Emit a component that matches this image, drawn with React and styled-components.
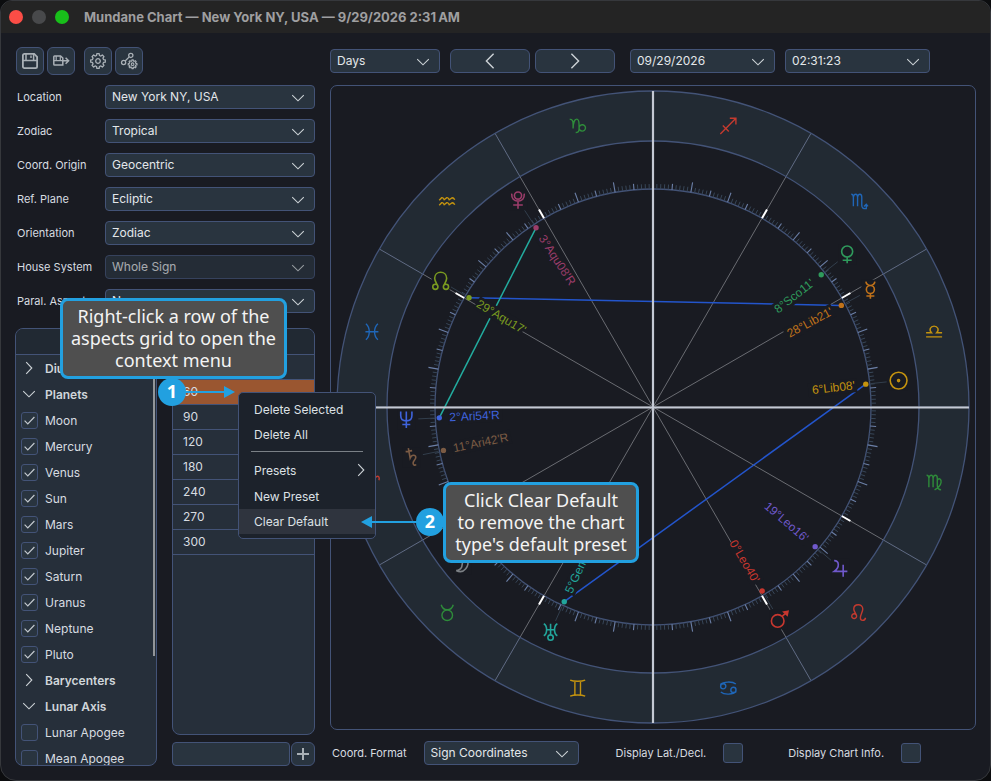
import React from "react";
import styled, { createGlobalStyle } from "styled-components";

const GlobalStyle = createGlobalStyle`
  * {
    box-sizing: border-box;
  }
  body {
    margin: 0;
    background-color: #0c0d0f;
    font-family: Inter, "Liberation Sans", sans-serif;
  }
`;

const Window = styled.div`
  position: relative;
  display: flex;
  flex-direction: column;
  min-height: 100vh;
  border: 1px solid #36383c;
  border-radius: 12px 12px 16px 16px;
  background-color: #191b22;
  color: #d7dce0;
  overflow: hidden;
`;

const TitleBar = styled.header`
  display: flex;
  align-items: center;
  gap: 9px;
  height: 32px;
  padding: 0 8px;
  background-color: #242424;
`;

const Light = styled.button`
  width: 14px;
  height: 14px;
  padding: 0;
  border: none;
  border-radius: 50%;
  background: ${({ $color }) => $color};
`;

const Title = styled.h1`
  margin: 0 0 0 6px;
  font-size: 13px;
  font-weight: 700;
  line-height: 16px;
  color: #9f9fa0;
`;

const Body = styled.div`
  display: grid;
  grid-template-columns: 300px 1fr;
  gap: 15px;
  flex: 1;
  padding: 14px;
`;

const Column = styled.div`
  display: flex;
  flex-direction: column;
  gap: 10px;
  min-width: 0;
`;

const Toolbar = styled.div`
  display: flex;
  align-items: center;
  gap: 9px;
  height: 28px;
  padding-left: 1px;
`;

const Controls = styled(Toolbar)`
  gap: 10px;
  padding-left: 0;
`;

const ButtonGroup = styled.div`
  display: flex;
  gap: ${({ $gap }) => $gap}px;
  margin-right: ${({ $after }) => $after}px;
`;

const IconButton = styled.button`
  display: flex;
  align-items: center;
  justify-content: center;
  flex: none;
  width: ${({ $width }) => $width || 28}px;
  height: ${({ $height }) => $height || 28}px;
  padding: 0;
  border: 1px solid #435377;
  border-radius: 6px;
  background-color: #29343f;
  color: #a9b0b6;
`;

const Fields = styled.div`
  display: grid;
  grid-template-columns: 90px 1fr;
  row-gap: 10px;
  align-items: center;
`;

const FieldLabel = styled.label`
  font-size: 11px;
  line-height: 16px;
  padding-left: 2px;
  white-space: nowrap;
`;

const SelectBox = styled.div`
  position: relative;
  flex: none;
  width: ${({ $width }) => ($width ? `${$width}px` : "100%")};
  height: 24px;
  opacity: ${({ $dim }) => ($dim ? 0.7 : 1)};

  svg {
    position: absolute;
    right: 9px;
    top: 5px;
    pointer-events: none;
  }
`;

const SelectInput = styled.select`
  appearance: none;
  width: 100%;
  height: 24px;
  padding: 0 24px 0 6px;
  border: 1px solid #435377;
  border-radius: 4px;
  background-color: #29343f;
  color: #e3e7ea;
  font-family: inherit;
  font-size: 12px;
  line-height: 20px;
  opacity: 1;
`;

const Panels = styled.div`
  display: grid;
  grid-template-columns: 142px 143px;
  justify-content: space-between;
  flex: 1;
  margin-top: 5px;
`;

const Panel = styled.section`
  display: flex;
  flex-direction: column;
  position: relative;
  border: 1px solid #435377;
  border-radius: 8px;
  background-color: #262f3a;
  overflow: hidden;
  flex: ${({ $grow }) => ($grow ? 1 : "none")};
`;

const PanelHeader = styled.div`
  height: 26px;
  border-bottom: 1px solid #435377;
  background-color: #212933;
`;

const TreeBody = styled.div`
  height: 410px;
  overflow: hidden;
`;

const ScrollThumb = styled.div`
  position: absolute;
  right: 1px;
  top: 27px;
  width: 2px;
  height: 300px;
  background-color: #929598;
`;

const TreeGroup = styled.button`
  display: flex;
  align-items: center;
  gap: 8px;
  width: 100%;
  height: 26px;
  padding: 0 0 0 5px;
  border: none;
  background: none;
  color: #d0d6da;
  font-family: inherit;
  font-size: 12px;
  font-weight: 600;
`;

const TreeIcon = styled.span`
  display: flex;
  justify-content: center;
  width: 16px;
`;

const TreeItem = styled.label`
  display: flex;
  align-items: center;
  gap: 7px;
  height: 26px;
  padding-left: 5px;
  font-size: 12px;
`;

const CheckBox = styled.span`
  display: inline-grid;
  width: ${({ $size }) => $size}px;
  height: ${({ $size }) => $size}px;

  input,
  svg {
    grid-area: 1 / 1;
  }

  svg {
    place-self: center;
    pointer-events: none;
  }

  input {
    appearance: none;
    width: 100%;
    height: 100%;
    margin: 0;
    border: 1px solid #435377;
    border-radius: 3px;
    background-color: #29343f;
  }
`;

const AspectColumn = styled.div`
  display: flex;
  flex-direction: column;
  gap: 7px;
`;

const AspectTable = styled.table`
  width: 100%;
  border-collapse: separate;
  border-spacing: 0;
`;

const AspectCell = styled.td`
  height: 25px;
  padding: 0 10px;
  border-bottom: 1px solid #435377;
  background-color: ${({ $selected }) => ($selected ? "#9a5630" : "transparent")};
  font-size: 12px;
  line-height: 16px;
`;

const AddRow = styled.div`
  display: flex;
  gap: 1px;
`;

const AspectInput = styled.input`
  flex: 1;
  min-width: 0;
  height: 24px;
  padding: 0 6px;
  border: 1px solid #435377;
  border-radius: 4px;
  background-color: #29343f;
  color: #e3e7ea;
`;

const ChartPanel = styled.section`
  border: 1px solid #435377;
  border-radius: 7px;
  line-height: 0;

  svg {
    width: 100%;
    height: auto;
  }
`;

const Footer = styled.div`
  display: flex;
  align-items: center;
  height: 24px;
  margin-top: 1px;
  gap: 17px;
`;

const FooterOption = styled.div`
  display: flex;
  align-items: center;
  gap: 17px;
  margin-left: ${({ $space }) => $space}px;
`;

const ContextMenu = styled.div`
  position: absolute;
  left: 237px;
  top: 391px;
  width: 138px;
  padding: 4px 0;
  border: 1px solid #435377;
  border-radius: 5px;
  background-color: #1c222b;
`;

const MenuItem = styled.button`
  display: flex;
  align-items: center;
  justify-content: space-between;
  width: 100%;
  height: ${({ $tall }) => ($tall ? 26 : 25)}px;
  padding: 0 6px 0 15px;
  border: none;
  background-color: ${({ $active }) => ($active ? "#2f343e" : "transparent")};
  color: #dde1e5;
  font-family: inherit;
  font-size: 12px;
`;

const MenuRule = styled.hr`
  margin: 4px 12px 5px;
  border: none;
  border-top: 1px solid #7a8086;
`;

const Callout = styled.div`
  position: absolute;
  left: ${({ $x }) => $x}px;
  top: ${({ $y }) => $y}px;
  width: ${({ $width }) => $width}px;
  padding: 4px 0 5px;
  border: 3px solid #22a0e0;
  border-radius: 8px;
  background-color: #4f4f4f;
  color: #f4f4f4;
  font-family: "Noto Sans", "Open Sans", sans-serif;
  font-size: 18px;
  line-height: 22px;
  text-align: center;
  white-space: pre;
`;

const Pointer = styled.svg`
  position: absolute;
  left: ${({ $x }) => $x}px;
  top: ${({ $y }) => $y}px;
  font-family: "Noto Sans", "Open Sans", sans-serif;
  font-size: 18px;
  font-weight: 700;
`;

const ChartLabel = styled.text`
  font-family: "Liberation Sans", sans-serif;
  font-size: 12px;
`;

const Chevron = ({ dir = "down", large }) => {
  const turns = { down: 0, left: 90, right: -90 };
  return (
    <svg width="16" height="16" viewBox="-8 -8 16 16">
      <path
        d={large ? "M-7.2 -3.6L0 3.6L7.2 -3.6" : "M-5.8 -2.8L0 2.8L5.8 -2.8"}
        fill="none"
        stroke="#ccd2d6"
        strokeWidth={large ? 1.4 : 1.1}
        transform={`rotate(${turns[dir]})`}
      />
    </svg>
  );
};

const gearPath = (outer, inner, teeth) => {
  const points = [];
  for (let i = 0; i < teeth; i++) {
    [
      [-0.32, inner],
      [-0.2, outer],
      [0.2, outer],
      [0.32, inner],
    ].forEach(([offset, r]) => {
      const a = ((i + offset) * 2 * Math.PI) / teeth;
      points.push(`${(Math.sin(a) * r).toFixed(2)} ${(-Math.cos(a) * r).toFixed(2)}`);
    });
  }
  return `M${points.join("L")}Z`;
};

const SaveIcon = () => (
  <svg width="18" height="18" viewBox="0 0 18 18" fill="none" stroke="currentColor" strokeWidth="1.8">
    <path d="M3.5 1.9H13.2L16.1 4.8V14.5Q16.1 16.1 14.5 16.1H3.5Q1.9 16.1 1.9 14.5V3.5Q1.9 1.9 3.5 1.9Z" />
    <path d="M2 8.6H16M5 2V8.6M12.6 2V8.6" strokeWidth="1.5" />
    <path d="M10 3.4V6" strokeWidth="1.4" />
  </svg>
);

const ExportIcon = () => (
  <svg width="18" height="18" viewBox="0 0 18 18" fill="none" stroke="currentColor" strokeWidth="1.5">
    <path d="M2.6 4H8.6L10.8 6V13H2.6Q1.8 13 1.8 12.2V4.8Q1.8 4 2.6 4Z" />
    <path d="M2 8.6H10.6M4.2 4V8.4M8.3 4V8.4" strokeWidth="1.2" />
    <path d="M10 8.8H16M13.6 5.8L16.6 8.8L13.6 11.8" />
  </svg>
);

const GearIcon = () => (
  <svg width="18" height="18" viewBox="-9 -9 18 18" fill="none" stroke="currentColor" strokeLinejoin="round">
    <path d={gearPath(7.4, 5.7, 8)} strokeWidth="1.3" />
    <circle r="2.3" strokeWidth="1.3" />
  </svg>
);

const AspectSettingsIcon = () => (
  <svg width="18" height="18" viewBox="-9 -9 18 18" fill="none" stroke="currentColor" strokeLinejoin="round">
    <circle cx="-5.4" cy="1.5" r="2.1" strokeWidth="1.3" />
    <circle cx="1.8" cy="-5.6" r="2.1" strokeWidth="1.3" />
    <path d="M-3.9 0L0.3 -4.1" strokeWidth="1.3" />
    <g transform="translate(3.6 3.2)">
      <path d={gearPath(4.4, 3.3, 8)} strokeWidth="1.2" />
      <circle r="1.3" strokeWidth="1.1" />
    </g>
  </svg>
);

const Select = ({ id, value, width, disabled, label }) => (
  <SelectBox $width={width} $dim={disabled}>
    <SelectInput id={id} aria-label={label} disabled={disabled} defaultValue={value}>
      <option>{value}</option>
    </SelectInput>
    <Chevron />
  </SelectBox>
);

const Check = ({ id, size = 17, checked }) => (
  <CheckBox $size={size}>
    <input id={id} type="checkbox" defaultChecked={checked} />
    {checked && (
      <svg width="11" height="9" viewBox="0 0 11 9">
        <path d="M0.6 4.6L3.8 7.8L10.4 1" fill="none" stroke="#c3c9ce" strokeWidth="1.2" />
      </svg>
    )}
  </CheckBox>
);

const fields = [
  { id: "location", label: "Location", value: "New York NY, USA" },
  { id: "zodiac", label: "Zodiac", value: "Tropical" },
  { id: "origin", label: "Coord. Origin", value: "Geocentric" },
  { id: "plane", label: "Ref. Plane", value: "Ecliptic" },
  { id: "orientation", label: "Orientation", value: "Zodiac" },
  { id: "houses", label: "House System", value: "Whole Sign", disabled: true },
  { id: "parallels", label: "Paral. Aspects", value: "None" },
];

const tree = [
  { name: "Diurnal", open: false, items: [] },
  {
    name: "Planets",
    open: true,
    checked: true,
    items: ["Moon", "Mercury", "Venus", "Sun", "Mars", "Jupiter", "Saturn", "Uranus", "Neptune", "Pluto"],
  },
  { name: "Barycenters", open: false, items: [] },
  { name: "Lunar Axis", open: true, checked: false, items: ["Lunar Apogee", "Mean Apogee"] },
];

const aspects = ["", "60", "90", "120", "180", "240", "270", "300"];

const RED = "#c43a2f";
const GREEN = "#2e8b3a";
const YELLOW = "#c4930f";
const BLUE = "#1f66b8";

// glyphs are drawn around 0,0 in a box of about 16px
const signs = [
  { color: RED, d: "M-7 -2C-9 -8 -1 -9 0 7C1 -9 9 -8 7 -2" },
  { color: GREEN, d: "M-6 -8C-5 -4 -3 -3 0 -3S5 -4 6 -8M5.3 2.5A5.3 5.3 0 1 1 -5.3 2.5A5.3 5.3 0 1 1 5.3 2.5" },
  { color: YELLOW, d: "M-7.5 -8C-4 -6.5 4 -6.5 7.5 -8M-7.5 8C-4 6.5 4 6.5 7.5 8M-2.8 -7V7M2.8 -7V7" },
  {
    color: BLUE,
    d: "M-8 -3.5C-5 -6.5 4 -7 7.5 -4M8 3.5C5 6.5 -4 7 -7.5 4M-2.5 -1.8A2.6 2.6 0 1 1 -7.7 -1.8A2.6 2.6 0 1 1 -2.5 -1.8M7.7 1.8A2.6 2.6 0 1 1 2.5 1.8A2.6 2.6 0 1 1 7.7 1.8",
  },
  {
    color: RED,
    d: "M-2.2 3.4A2.4 2.4 0 1 1 -7 3.4A2.4 2.4 0 1 1 -2.2 3.4C-2.2 1 -5 -1 -5 -3.8C-5 -9.5 4 -9.5 4 -3.8C4 -1 1.6 2 1.6 5C1.6 8.5 6 8.5 6.8 5",
  },
  {
    color: GREEN,
    d: "M-7.5 -7C-5.8 -7 -5.2 -6 -5.2 -4V5M-5.2 -4C-4.5 -8 -1 -8 -1 -4V5M-1 -4C-0.3 -8 3.2 -8 3.2 -4V3C3.2 5.5 4.5 7.5 7 7.5M3.2 -2C5 -5 7.5 -3 7 0C6.5 3 4 5.5 0.5 7.5",
  },
  { color: YELLOW, d: "M-8 5.2H8M-8 1H-2.6C-5.6 -2 -3.4 -5.6 0 -5.6S5.6 -2 2.6 1H8" },
  {
    color: BLUE,
    d: "M-7.5 -7C-6 -7 -5.4 -6 -5.4 -4V5M-5.4 -4C-4.8 -8 -1.2 -8 -1.2 -4V5M-1.2 -4C-0.6 -8 3 -8 3 -4V4C3 7 4.5 7.6 7.5 7.4V3.6M5.2 5.2L7.5 3L9.2 5.2",
  },
  { color: RED, d: "M-8 8L7.6 -7.6M1.5 -7.6H7.6V-1.5M-5.5 -0.5L0.5 5.5" },
  {
    color: GREEN,
    d: "M-8 -6.5C-5.6 -7 -4.6 -5 -4.6 -2V2.5C-4.6 -3 -3 -6.8 -1 -6.8S1.4 -4 1.4 -1V3C1.4 5.5 0.4 6.6 -2 6.6M1.4 2A3.2 3.2 0 1 1 4.4 5.2C2.6 5.2 1.4 3.5 1.4 2",
  },
  {
    color: YELLOW,
    d: "M-8 -1L-5.5 -3.5Q-4 -4 -3 -1.5L-0.5 -3.5Q1 -4 2 -1.5L5 -3.5Q6.5 -3.5 7.5 -1.5M-8 4L-5.5 1.5Q-4 1 -3 3.5L-0.5 1.5Q1 1 2 3.5L5 1.5Q6.5 1.5 7.5 3.5",
  },
  { color: BLUE, d: "M-6 -8C-1.5 -4 -1.5 4 -6 8M6 -8C1.5 -4 1.5 4 6 8M-6.5 0H6.5" },
];

const bodies = [
  {
    name: "Moon",
    lon: 39.6,
    label: "9°Tau36'",
    color: "#7c8085",
    d: "M-6.5 6C1 10 8 2 4 -7M-6.5 6C-1 6 1 0 -1 -5",
  },
  {
    name: "Mercury",
    lon: 208.35,
    label: "28°Lib21'",
    color: "#c0721a",
    d: "M-4.5 -8C-4 -5 -2 -4.2 0 -4.2S4 -5 4.5 -8M4 -0.2A4 4 0 1 1 -4 -0.2A4 4 0 1 1 4 -0.2M0 3.8V9M-4 6.3H4",
  },
  {
    name: "Venus",
    lon: 218.18,
    label: "8°Sco11'",
    color: "#2f9a5c",
    d: "M5.5 -2.8A5.5 5.5 0 1 1 -5.5 -2.8A5.5 5.5 0 1 1 5.5 -2.8M0 2.7V9M-4.5 5.9H4.5",
  },
  {
    name: "Sun",
    lon: 186.13,
    label: "6°Lib08'",
    color: "#c4930f",
    d: "M8.4 0A8.4 8.4 0 1 1 -8.4 0A8.4 8.4 0 1 1 8.4 0M1 0A1 1 0 1 1 -1 0A1 1 0 1 1 1 0",
  },
  {
    name: "Mars",
    lon: 120.67,
    label: "0°Leo40'",
    color: "#c8372f",
    d: "M5 1.5A6.3 6.3 0 1 1 -7.6 1.5A6.3 6.3 0 1 1 5 1.5M3.2 -3L8.6 -8M4.8 -7.4L9 -8.2L8.2 -4.2Z",
  },
  {
    name: "Jupiter",
    lon: 139.27,
    label: "19°Leo16'",
    color: "#7059cc",
    d: "M-6 -7.5C-1 -7.5 0 -1 -6 3.2H7.2M3 -3.5V8.5",
  },
  {
    name: "Saturn",
    lon: 11.7,
    label: "11°Ari42'R",
    color: "#7b5b44",
    d: "M-5.5 -5.5L1 -6.5M-2.8 -9L-1 1C1 -3.5 5.5 -2 4.5 1C4 3 1.5 4.2 2 6.5C2.4 8.4 4 8.4 5 7.4",
  },
  {
    name: "Uranus",
    lon: 65.5,
    label: "5°Gem32'R",
    color: "#22a59b",
    d: "M-6.8 -8C-3 -6 -3 2 -6.8 4M6.8 -8C3 -6 3 2 6.8 4M-4 -2H4M0 -8V3M2.7 5.8A2.7 2.7 0 1 1 -2.7 5.8A2.7 2.7 0 1 1 2.7 5.8",
  },
  {
    name: "Neptune",
    lon: 2.9,
    label: "2°Ari54'R",
    color: "#3f63dc",
    d: "M-5.6 -8V-4C-5.6 0.5 -3 1.4 0 1.4S5.6 0.5 5.6 -4V-8M0 -8V8.6M-4 5H4",
  },
  {
    name: "Pluto",
    lon: 303.13,
    label: "3°Aqu08'R",
    color: "#9b3d6a",
    d: "M-6.3 -6.5C-6.5 -1.5 -4 1 0 1S6.5 -1.5 6.3 -6.5M3.6 -4.6A3.6 3.6 0 1 1 -3.6 -4.6A3.6 3.6 0 1 1 3.6 -4.6M0 1V8.5M-4.8 4.8H4.8",
  },
  {
    name: "Node",
    lon: 329.28,
    label: "29°Aqu17'",
    color: "#7a9a20",
    d: "M-2.7 6A2.6 2.6 0 1 1 -7.9 6A2.6 2.6 0 1 1 -2.7 6C-2.7 3.5 -6 1.5 -6 -2.5C-6 -10.5 6 -10.5 6 -2.5C6 1.5 2.7 3.5 2.7 6A2.6 2.6 0 1 0 7.9 6A2.6 2.6 0 1 0 2.7 6",
  },
];

const lines = [
  { from: "Node", to: "Mercury", color: "#2355cc" },
  { from: "Sun", to: "Uranus", color: "#2355cc" },
  { from: "Pluto", to: "Neptune", color: "#23ac9f" },
];

// 0° Aries sits on the left, longitudes run counterclockwise
const point = (lon, r) => {
  const a = (lon * Math.PI) / 180;
  return { x: -r * Math.cos(a), y: r * Math.sin(a) };
};

const Spoke = ({ lon, from, to, ...rest }) => {
  const a = point(lon, from);
  const b = point(lon, to);
  return <line x1={a.x} y1={a.y} x2={b.x} y2={b.y} {...rest} />;
};

const ticks = Array.from({ length: 360 }, (_, i) => i).filter((i) => i % 90 !== 0);
const cusps = Array.from({ length: 12 }, (_, i) => i * 30);

const tickStyle = (i) => {
  if (i % 30 === 0) return { to: 228, stroke: "#ffffff", strokeWidth: 2 };
  if (i % 10 === 0) return { to: 228, stroke: "#6c80a8", strokeWidth: 1.1 };
  if (i % 5 === 0) return { to: 224, stroke: "#6c80a8", strokeWidth: 1.1 };
  return { to: 223, stroke: "#374658", strokeWidth: 1 };
};

const BodyLabel = ({ body }) => {
  const right = body.lon > 90 && body.lon < 270;
  const width = body.label.length * 5.6;
  return (
    <g transform={`rotate(${right ? 180 - body.lon : -body.lon})`}>
      <rect x={right ? 201 - width : -205} y="-7" width={width + 4} height="14" fill="#191b22" />
      <ChartLabel x={right ? 203 : -204} y="4" textAnchor={right ? "end" : "start"} fill={body.color}>
        {body.label}
      </ChartLabel>
    </g>
  );
};

const Chart = () => (
  <svg viewBox="-322 -321 644 643" role="img" aria-label="Mundane chart">
    <circle r="291" fill="none" stroke="#222a33" strokeWidth="50" />
    {cusps.map((lon) => (
      <g key={lon}>
        <Spoke lon={lon} from={0} to={266} stroke="#6a6c72" />
        <Spoke lon={lon} from={266} to={316} stroke="#606b84" />
      </g>
    ))}
    {[218, 266, 316].map((r) => (
      <circle key={r} r={r} fill="none" stroke="#435377" strokeWidth="1.3" />
    ))}
    {ticks.map((i) => (
      <Spoke key={i} lon={i} from={218} {...tickStyle(i)} />
    ))}
    {lines.map((line) => {
      const a = point(bodies.find((body) => body.name === line.from).lon, 214);
      const b = point(bodies.find((body) => body.name === line.to).lon, 214);
      return (
        <line key={line.from} x1={a.x} y1={a.y} x2={b.x} y2={b.y} stroke={line.color} strokeWidth="1.5" />
      );
    })}
    {bodies.map((body) => (
      <BodyLabel key={body.name} body={body} />
    ))}
    <path d="M-316 0.5H316M0 -316V316" stroke="#c4c9d4" strokeWidth="2.2" />
    {bodies.map((body) => {
      const dot = point(body.lon, 214);
      const glyph = point(body.lon, 247);
      return (
        <g key={body.name}>
          <Spoke lon={body.lon} from={219} to={235} stroke="#323e4c" />
          <circle cx={dot.x} cy={dot.y} r="2.7" fill={body.color} />
          <g transform={`translate(${glyph.x} ${glyph.y})`}>
            <rect x="-9" y="-10" width="18" height="20" fill="#191b22" />
            <path d={body.d} fill="none" stroke={body.color} strokeWidth="1.6" />
          </g>
        </g>
      );
    })}
    {signs.map((sign, i) => {
      const p = point(i * 30 + 15, 291);
      return (
        <path
          key={i}
          d={sign.d}
          transform={`translate(${p.x} ${p.y})`}
          fill="none"
          stroke={sign.color}
          strokeWidth="1.4"
        />
      );
    })}
  </svg>
);

const App = () => {
  return (
    <>
      <GlobalStyle />
      <Window>
        <TitleBar>
          <Light $color="#fb4d46" aria-label="Close" />
          <Light $color="#48494b" aria-label="Minimize" />
          <Light $color="#18bf1a" aria-label="Zoom" />
          <Title>Mundane Chart — New York NY, USA — 9/29/2026 2:31{"\u202f"}AM</Title>
        </TitleBar>
        <Body>
          <Column>
            <Toolbar>
              <ButtonGroup $gap={3} $after={0}>
                <IconButton aria-label="Save">
                  <SaveIcon />
                </IconButton>
                <IconButton aria-label="Export">
                  <ExportIcon />
                </IconButton>
              </ButtonGroup>
              <ButtonGroup $gap={3} $after={0}>
                <IconButton aria-label="Settings">
                  <GearIcon />
                </IconButton>
                <IconButton aria-label="Aspect settings">
                  <AspectSettingsIcon />
                </IconButton>
              </ButtonGroup>
            </Toolbar>
            <Fields>
              {fields.map((field) => (
                <React.Fragment key={field.id}>
                  <FieldLabel htmlFor={field.id}>{field.label}</FieldLabel>
                  <Select id={field.id} value={field.value} disabled={field.disabled} />
                </React.Fragment>
              ))}
            </Fields>
            <Panels>
              <Panel>
                <PanelHeader />
                <TreeBody>
                  {tree.map((group) => (
                    <React.Fragment key={group.name}>
                      <TreeGroup>
                        <TreeIcon>
                          <Chevron dir={group.open ? "down" : "right"} />
                        </TreeIcon>
                        {group.name}
                      </TreeGroup>
                      {group.items.map((item) => (
                        <TreeItem key={item}>
                          <Check checked={group.checked} />
                          {item}
                        </TreeItem>
                      ))}
                    </React.Fragment>
                  ))}
                </TreeBody>
                <ScrollThumb />
              </Panel>
              <AspectColumn>
                <Panel $grow>
                  <PanelHeader />
                  <AspectTable>
                    <tbody>
                      {aspects.map((aspect) => (
                        <tr key={aspect}>
                          <AspectCell $selected={aspect === "60"}>{aspect}</AspectCell>
                        </tr>
                      ))}
                    </tbody>
                  </AspectTable>
                </Panel>
                <AddRow>
                  <AspectInput type="text" aria-label="New aspect" />
                  <IconButton $width={24} $height={24} aria-label="Add aspect">
                    <svg width="12" height="12" viewBox="0 0 12 12">
                      <path d="M6 0V12M0 6H12" stroke="currentColor" strokeWidth="2" />
                    </svg>
                  </IconButton>
                </AddRow>
              </AspectColumn>
            </Panels>
          </Column>
          <Column>
            <Controls>
              <Select label="Step" value="Days" width={110} />
              <ButtonGroup $gap={5} $after={5}>
                <IconButton $width={80} $height={24} aria-label="Previous">
                  <Chevron dir="left" large />
                </IconButton>
                <IconButton $width={80} $height={24} aria-label="Next">
                  <Chevron dir="right" large />
                </IconButton>
              </ButtonGroup>
              <Select label="Date" value="09/29/2026" width={145} />
              <Select label="Time" value="02:31:23" width={145} />
            </Controls>
            <ChartPanel>
              <Chart />
            </ChartPanel>
            <Footer>
              <FieldLabel htmlFor="format">Coord. Format</FieldLabel>
              <Select id="format" value="Sign Coordinates" width={155} />
              <FooterOption $space={18}>
                <FieldLabel htmlFor="latitude">Display Lat./Decl.</FieldLabel>
                <Check id="latitude" size={20} />
              </FooterOption>
              <FooterOption $space={26}>
                <FieldLabel htmlFor="info">Display Chart Info.</FieldLabel>
                <Check id="info" size={20} />
              </FooterOption>
            </Footer>
          </Column>
        </Body>
        <ContextMenu>
          <MenuItem>Delete Selected</MenuItem>
          <MenuItem>Delete All</MenuItem>
          <MenuRule />
          <MenuItem $tall>
            Presets
            <Chevron dir="right" />
          </MenuItem>
          <MenuItem $tall>New Preset</MenuItem>
          <MenuItem $active>Clear Default</MenuItem>
        </ContextMenu>
        <Callout $x={59} $y={297} $width={227}>
          {"Right-click a row of the\naspects grid to open the\ncontext menu"}
        </Callout>
        <Pointer $x={157} $y={377} width="78" height="28" viewBox="0 0 78 28">
          <path d="M14 14H68" stroke="#22a0e0" strokeWidth="2" />
          <path d="M66 8L77 14L66 20Z" fill="#22a0e0" />
          <circle cx="14" cy="14" r="14" fill="#22a0e0" />
          <text x="14" y="20" textAnchor="middle" fill="#ffffff">
            1
          </text>
        </Pointer>
        <Pointer $x={359} $y={507} width="84" height="28" viewBox="0 0 84 28">
          <path d="M70 14H10" stroke="#22a0e0" strokeWidth="2" />
          <path d="M12 8L1 14L12 20Z" fill="#22a0e0" />
          <circle cx="70" cy="14" r="14" fill="#22a0e0" />
          <text x="70" y="20" textAnchor="middle" fill="#ffffff">
            2
          </text>
        </Pointer>
        <Callout $x={442} $y={481} $width={196}>
          {"Click Clear Default\nto remove the chart\ntype's default preset"}
        </Callout>
      </Window>
    </>
  );
};

export default App;
